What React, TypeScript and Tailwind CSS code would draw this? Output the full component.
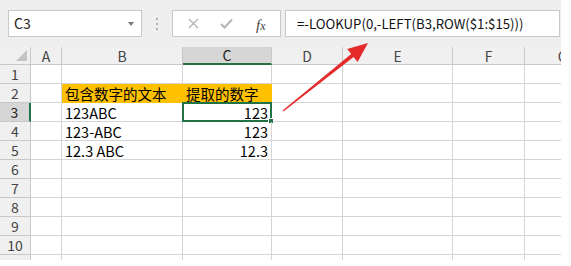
import React from "react";

const cols = ["A", "B", "C", "D", "E", "F", "G"];

const rows: { b?: string; c?: string; head?: boolean }[] = [
  {},
  { b: "包含数字的文本", c: "提取的数字", head: true },
  { b: "123ABC", c: "123" },
  { b: "123-ABC", c: "123" },
  { b: "12.3 ABC", c: "12.3" },
  {},
  {},
  {},
  {},
  {},
  {},
];

const Toolbar = () => (
  <div className="flex h-[47px] bg-[#eeeeee] pt-[10px] pl-[8px]">
    <div className="flex h-[27px] w-[134px] items-center justify-between border border-[#c8c8c8] bg-white pl-[5px] pr-[7px] text-[14px] text-[#222]">
      <span>C3</span>
      <span className="h-0 w-0 border-x-[3.5px] border-t-[4px] border-x-transparent border-t-[#777]" />
    </div>
    <div className="flex h-[27px] w-[30px] flex-col items-center justify-center gap-[3px]">
      <span className="h-[2px] w-[2px] bg-[#b0b0b0]" />
      <span className="h-[2px] w-[2px] bg-[#b0b0b0]" />
      <span className="h-[2px] w-[2px] bg-[#b0b0b0]" />
    </div>
    <div className="relative flex h-[27px] w-[109px] items-center border border-[#c8c8c8] bg-white">
      <svg className="absolute left-[15px] top-[7px]" width="11" height="11" viewBox="0 0 11 11">
        <path d="M1 1L10 10M10 1L1 10" stroke="#b5b5b5" strokeWidth="1.4" />
      </svg>
      <svg className="absolute left-[47px] top-[7px]" width="13" height="11" viewBox="0 0 13 11">
        <path d="M1 6L4.5 9.5L12 1.5" stroke="#b5b5b5" strokeWidth="2" fill="none" />
      </svg>
      <span className="absolute left-[83px] top-[3px] font-['Liberation_Serif',serif] text-[15px] italic text-[#444]">
        f<span className="text-[12px]">x</span>
      </span>
    </div>
    <div className="ml-[4px] flex h-[27px] w-[275px] items-center border border-[#c8c8c8] bg-white pl-[11px] text-[13.2px] text-[#111]">
      =-LOOKUP(0,-LEFT(B3,ROW($1:$15)))
    </div>
  </div>
);

const Grid = () => (
  <div className="grid grid-cols-[31px_31px_121px_89px_71px_110px_72px_76px] text-[14.5px] text-black">
    <div className="relative h-[18px] border-b border-r border-[#c8c8c8] bg-[#f0f0f0]">
      <svg className="absolute bottom-[3px] right-[3px]" width="11" height="11" viewBox="0 0 11 11">
        <polygon points="11,0 11,11 0,11" fill="#c4c4c4" />
      </svg>
    </div>
    {cols.map((c) => (
      <div
        key={c}
        className={
          c === "C"
            ? "flex h-[18px] items-center justify-center border-b-2 border-r border-b-[#217346] border-r-[#c8c8c8] bg-[#d6d6d6] text-[14px] leading-none text-[#222]"
            : "flex h-[18px] items-center justify-center border-b border-r border-[#c8c8c8] bg-[#f0f0f0] text-[14px] leading-none text-[#444]"
        }
      >
        {c}
      </div>
    ))}
    {rows.map((r, i) => (
      <React.Fragment key={i}>
        <div
          className={
            i === 2
              ? "flex h-[19px] items-center justify-center border-b border-r-2 border-b-[#c8c8c8] border-r-[#217346] bg-[#d6d6d6] text-[14px] text-[#222]"
              : "flex h-[19px] items-center justify-center border-b border-r border-[#c8c8c8] bg-[#f0f0f0] text-[14px] text-[#444]"
          }
        >
          {i < 10 ? i + 1 : ""}
        </div>
        <div className="h-[19px] border-b border-r border-[#d4d4d4]" />
        <div
          className={
            r.head
              ? "h-[19px] whitespace-nowrap border-b border-r border-[#ffc000] bg-[#ffc000] pl-[3px] leading-[19px]"
              : "h-[19px] whitespace-nowrap border-b border-r border-[#d4d4d4] pl-[3px] leading-[19px]"
          }
        >
          {r.b}
        </div>
        <div
          className={
            r.head
              ? "h-[19px] whitespace-nowrap border-b border-r border-[#ffc000] bg-[#ffc000] pl-[3px] leading-[19px]"
              : "relative h-[19px] whitespace-nowrap border-b border-r border-[#d4d4d4] pr-[3px] text-right leading-[19px]"
          }
        >
          {r.c}
          {i === 2 && (
            <>
              <span className="absolute -left-[1px] -top-[1px] h-[20px] w-[90px] border-2 border-[#217346]" />
              <span className="absolute -bottom-[3px] -right-[3px] h-[6px] w-[6px] border border-white bg-[#217346]" />
            </>
          )}
        </div>
        <div className="h-[19px] border-b border-r border-[#d4d4d4]" />
        <div className="h-[19px] border-b border-r border-[#d4d4d4]" />
        <div className="h-[19px] border-b border-r border-[#d4d4d4]" />
        <div className="h-[19px] border-b border-r border-[#d4d4d4]" />
      </React.Fragment>
    ))}
  </div>
);

export default function App() {
  return (
    <div className="h-[266px] w-[571px] bg-white">
      <div className="relative h-[260px] w-[561px] overflow-hidden font-['Noto_Sans_CJK_SC',sans-serif]">
        <Toolbar />
        <Grid />
        <svg className="absolute left-0 top-0" width="561" height="260" viewBox="0 0 561 260">
          <polygon
            points="282.6,110.5 351.2,53.9 347.2,49.1 368,43 357.6,61.9 353.6,57.1 283.4,111.5"
            fill="#e42a2a"
          />
        </svg>
      </div>
    </div>
  );
}
